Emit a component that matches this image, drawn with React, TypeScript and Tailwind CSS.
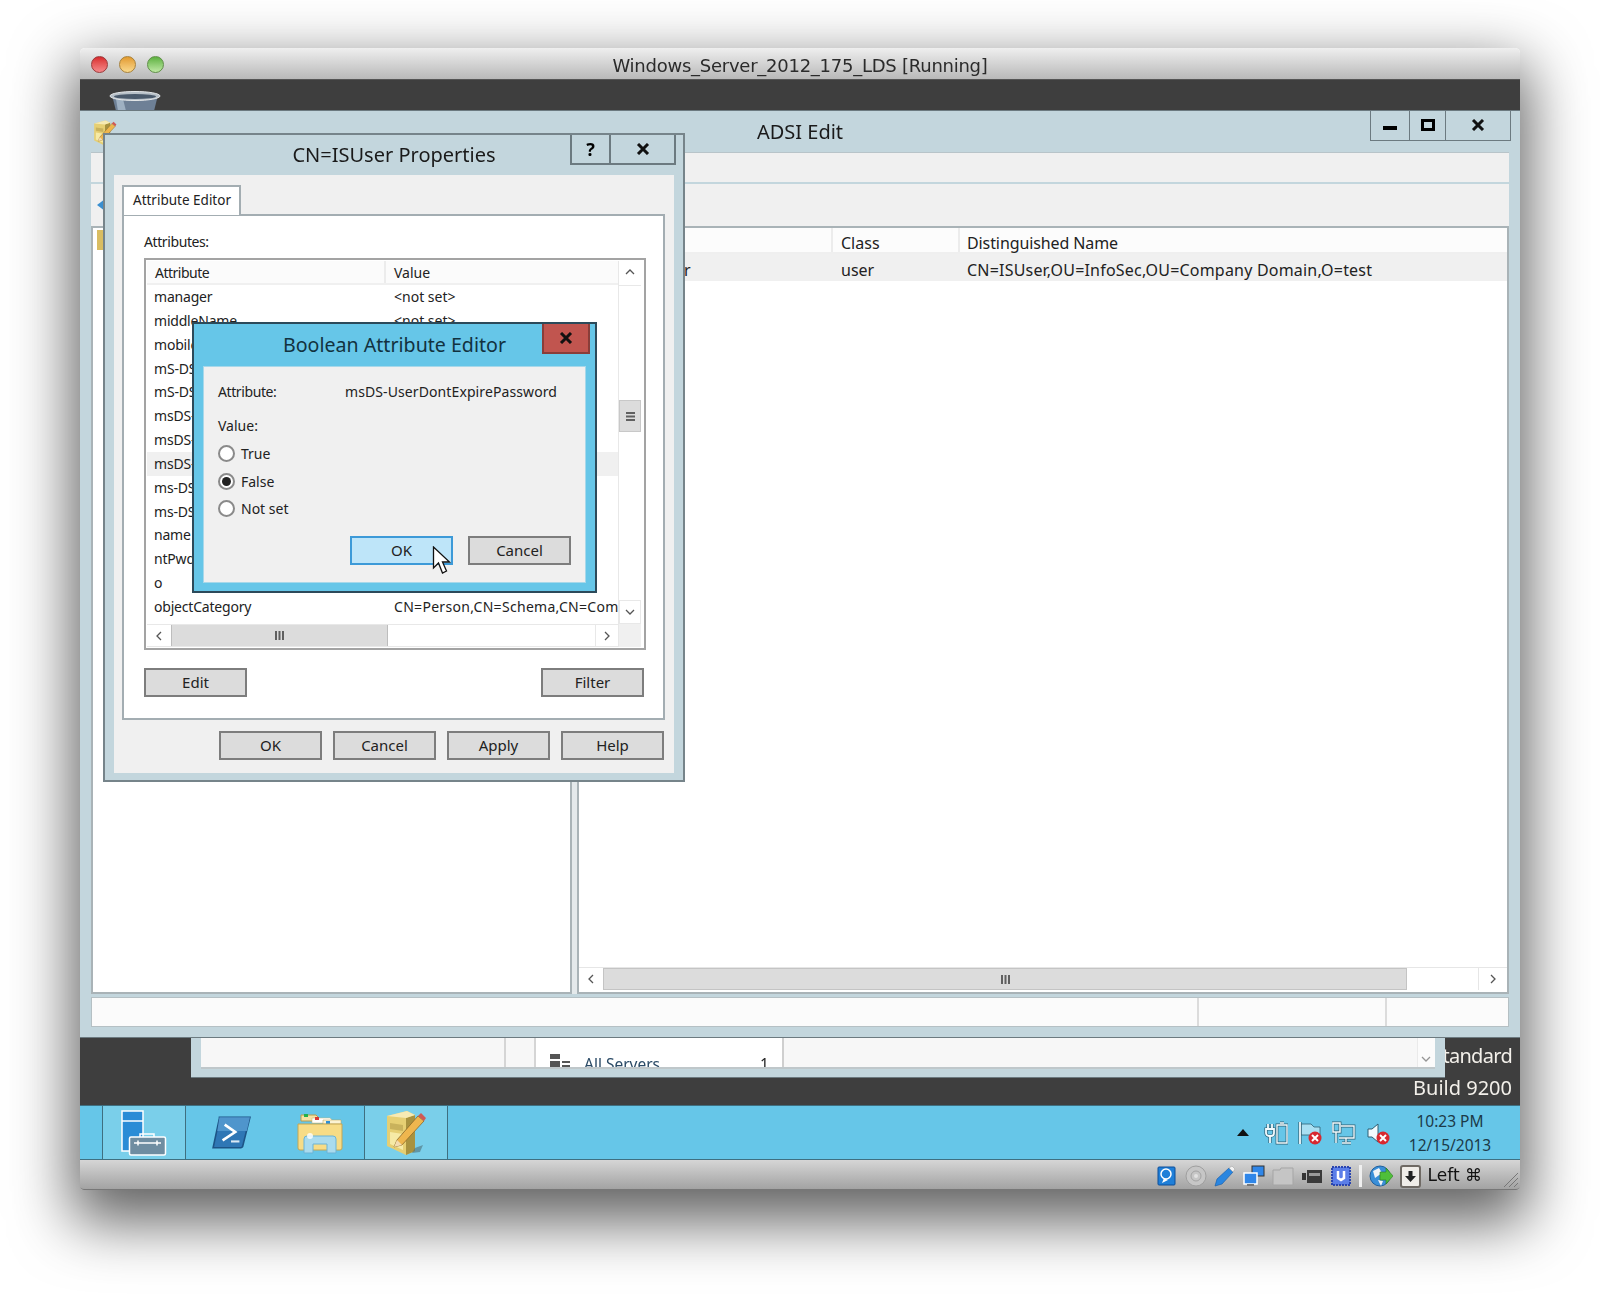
// App.tsx
import React from "react";

const rows = [
  ["manager", "<not set>"],
  ["middleName", "<not set>"],
  ["mobile", "<not set>"],
  ["mS-DS-ConsistencyChildCount", "<not set>"],
  ["mS-DS-ConsistencyGuid", "<not set>"],
  ["msDS-UserAccountDisabled", "<not set>"],
  ["msDS-UserPasswordExpired", "<not set>"],
  ["msDS-UserDontExpirePassword", "FALSE"],
  ["ms-DS-ReplicationNotify", "<not set>"],
  ["ms-DS-Security", "<not set>"],
  ["name", "ISUser"],
  ["ntPwdHistory", "<not set>"],
  ["o", "<not set>"],
  ["objectCategory", "CN=Person,CN=Schema,CN=Company"],
];

const Chevron: React.FC<{ dir: "up" | "down" | "left" | "right" }> = ({ dir }) => {
  const d = {
    up: "M2 7l4-4 4 4",
    down: "M2 4l4 4 4-4",
    left: "M8 2L4 6l4 4",
    right: "M4 2l4 4-4 4",
  }[dir];
  return (
    <svg width="12" height="12" viewBox="0 0 12 12" fill="none" stroke="#555" strokeWidth="1.3">
      <path d={d} />
    </svg>
  );
};

const Grip: React.FC<{ vertical?: boolean }> = ({ vertical }) => (
  <svg width="11" height="11" viewBox="0 0 11 11" fill="#606060">
    {vertical ? (
      <path d="M1 1h2v9H1zM4.500 1h2v9h-2zM8 1h2v9H8z" />
    ) : (
      <path d="M1 1h9v2H1zM1 4.500h9v2H1zM1 8h9v2H1z" />
    )}
  </svg>
);

const Btn: React.FC<{ label: string; active?: boolean }> = ({ label, active }) => (
  <div
    className={
      active
        ? "w-[103px] h-[29px] flex items-center justify-center border-2 border-[#3d9ad8] bg-[#bee5f9] text-[15px] text-[#222]"
        : "w-[103px] h-[29px] flex items-center justify-center border-2 border-[#7d7d7d] bg-[#dcdcdc] text-[15px] text-[#222]"
    }
  >
    {label}
  </div>
);

const Radio: React.FC<{ label: string; checked?: boolean; className?: string }> = ({
  label,
  checked,
  className,
}) => (
  <div className={"flex items-center h-[20px] " + (className || "")}>
    <div className="w-[17px] h-[17px] rounded-full border-2 border-[#8a8a8a] bg-white flex items-center justify-center">
      {checked && <div className="w-[9px] h-[9px] rounded-full bg-[#222]" />}
    </div>
    <span className="ml-[6px] text-[14px] text-[#222]">{label}</span>
  </div>
);

const Cross: React.FC = () => (
  <svg width="14" height="12" viewBox="0 0 14 12" stroke="#111" strokeWidth="3" fill="none">
    <path d="M2 1l10 10M12 1L2 11" />
  </svg>
);

const RedX: React.FC<{ x: number; y: number }> = ({ x, y }) => (
  <g>
    <circle cx={x} cy={y} r="6.500" fill="#d8282f" />
    <path d={`M${x - 3} ${y - 3}l6 6M${x + 3} ${y - 3}l-6 6`} stroke="#fff" strokeWidth="2" />
  </g>
);

const NotepadIcon: React.FC<{ size: number }> = ({ size }) => (
  <svg width={size} height={size * 1.07} viewBox="0 0 42 45">
    <path d="M2 6l20-5 8 4v36l-9 4L2 36z" fill="#e6cf73" />
    <path d="M21 8l9-3v36l-9 4z" fill="#a8923f" />
    <path d="M2 6l20-5 8 4-9 3z" fill="#f6eab4" />
    <path d="M5 13l13 2v6L5 19z" fill="#c9b25c" />
    <path d="M5 22l13 2v16L5 34z" fill="#f6eaa6" />
    <path d="M30 38l8-3-3 7-8 1z" fill="#4f6f78" opacity="0.6" />
    <path d="M9 37l3-7 21-24 6 5-22 24z" fill="#eeb64e" stroke="#8a6a2a" strokeWidth="0.8" />
    <path d="M33 6l3-3 5 5-2 3z" fill="#cf5a55" />
    <path d="M9 37l3-7 5 5z" fill="#f3dcb0" />
  </svg>
);

const ServerManagerIcon: React.FC = () => (
  <svg width="46" height="46" viewBox="0 0 46 46">
    <rect x="1" y="1" width="21" height="40" fill="#2a8cd6" stroke="#fff" strokeWidth="1.5" />
    <path d="M1 11h21" stroke="#fff" strokeWidth="1.500" />
    <path d="M19 27v-3h14v3" fill="none" stroke="#fff" strokeWidth="1.500" />
    <rect x="8.500" y="27" width="36" height="18" rx="1.500" fill="#6f8da1" stroke="#fff" strokeWidth="1.500" />
    <path d="M13 33h27" stroke="#fff" strokeWidth="1.500" />
    <path d="M17 30.500v5M36 30.500v5" stroke="#fff" strokeWidth="1.500" />
  </svg>
);

const PowerShellIcon: React.FC = () => (
  <svg width="40" height="33" viewBox="0 0 38 31">
    <path d="M8 1h29l-7 28a2 2 0 0 1-2 1H2l6-28z" fill="#2f77b5" stroke="#1d5486" strokeWidth="1.500" />
    <path d="M8 1h29l-3 13H6z" fill="#4f95cc" />
    <path d="M13 8l10 7-12 8" fill="none" stroke="#fff" strokeWidth="2.500" />
    <path d="M19 24h8" stroke="#dbe9f4" strokeWidth="2" />
  </svg>
);

const ExplorerIcon: React.FC = () => (
  <svg width="46" height="42" viewBox="0 0 46 42">
    <path d="M4 9V3h15l3 3v3z" fill="#f5e2a2" stroke="#b99c4c" />
    <rect x="7" y="2" width="4" height="3" fill="#22b14c" />
    <path d="M15 11V6h18l2 2v3z" fill="#fff" stroke="#c9b673" strokeWidth="0.500" />
    <rect x="18" y="5" width="4" height="3" fill="#d83a35" />
    <path d="M26 12V8h18v4z" fill="#fbf3d3" stroke="#b99c4c" strokeWidth="0.500" />
    <rect x="29" y="9" width="4" height="3" fill="#2d8fd8" />
    <path d="M1 12h44v24a2 2 0 0 1-2 2H3a2 2 0 0 1-2-2z" fill="#f7dc86" stroke="#c3a655" />
    <path d="M7 41V27a3 3 0 0 1 3-3h26a3 3 0 0 1 3 3v14h-9V32H16v9z" fill="#a9dbee" stroke="#6ab3d6" />
    <circle cx="13" cy="24" r="3" fill="#fff" opacity="0.800" />
  </svg>
);

const Tray: React.FC<{ children: React.ReactNode }> = ({ children }) => (
  <svg width="24" height="24" viewBox="0 0 24 24" fill="none">
    {children}
  </svg>
);

// tray glyphs are white with a dark rim, so each outline is stroked twice
const Rim: React.FC<{ d: string; w?: number }> = ({ d, w = 1.8 }) => (
  <g>
    <path d={d} stroke="#2f5f73" strokeWidth={w + 1.4} />
    <path d={d} stroke="#f2fbfe" strokeWidth={w} />
  </g>
);

const Ic: React.FC<{ w?: number; children: React.ReactNode }> = ({ w = 22, children }) => (
  <svg width={w} height="22" viewBox={`0 0 ${w} 22`}>
    {children}
  </svg>
);

export default function App() {
  return (
    <div className="w-[1600px] h-[1301px] bg-white pl-[80px] pt-[48px] overflow-hidden font-['Noto_Sans',sans-serif]">
      <div className="w-[1440px] h-[1142px] flex flex-col rounded-t-[5px] rounded-b-[4px] blur-[0.35px] shadow-[0_24px_60px_8px_rgba(0,0,0,0.62)]">
        {/* mac title bar */}
        <div className="relative h-[32px] flex items-center justify-center pt-[3px] rounded-t-[5px] bg-gradient-to-b from-[#efefef] to-[#b9b9b9] border-b border-[#555]">
          <div className="absolute left-[11px] top-[8px] flex gap-[11px]">
            <div className="w-[17px] h-[17px] rounded-full border border-[#9a3a3a] bg-gradient-to-b from-[#d8262c] to-[#f5878a]" />
            <div className="w-[17px] h-[17px] rounded-full border border-[#a8813a] bg-gradient-to-b from-[#e29a2b] to-[#f9d98b]" />
            <div className="w-[17px] h-[17px] rounded-full border border-[#5f8f47] bg-gradient-to-b from-[#5cb13e] to-[#bfe9a4]" />
          </div>
          <span className="text-[18px] text-[#2b2b2b] font-['DejaVu_Sans',sans-serif] tracking-[-0.25px]">
            Windows_Server_2012_175_LDS [Running]
          </span>
        </div>

        {/* guest screen */}
        <div className="flex-1 flex flex-col bg-[#3e3e3e]">
          <div className="relative flex-1">
            {/* recycle bin peeking out */}
            <svg className="absolute left-[29px] top-[11px]" width="52" height="20" viewBox="0 0 52 20">
              <path d="M3 4l4 16h38l4-16z" fill="#6e8096" />
              <path d="M7 8l2 12h8L14 8z" fill="#9eb0c2" />
              <ellipse cx="26" cy="5" rx="25" ry="4.500" fill="#b7c0c8" stroke="#e3e6e8" />
              <ellipse cx="26" cy="5.500" rx="21" ry="2.500" fill="#4a5a6c" />
            </svg>

            {/* desktop text */}
            <div className="absolute right-[8px] top-[960px] text-right text-[20px] leading-[32px] text-[#f3f0ea]">
              <div className="tracking-[-0.7px]">Standard</div>
              <div>Build 9200</div>
            </div>

            {/* server manager behind */}
            <div className="absolute left-[111px] top-[948px] w-[1254px] h-[50px] bg-[#c3d6dd] border-b border-[#6c7a80] px-[10px] pb-[8px]">
              <div className="h-full flex bg-[#f7f7f7] border-b-2 border-[#bfc7ca]">
                <div className="w-[305px] border-r-2 border-[#d5d5d5]" />
                <div className="w-[30px] border-r-2 border-[#d5d5d5]" />
                <div className="w-[248px] bg-white border-r-2 border-[#cfcfcf] overflow-hidden relative">
                  <div className="flex items-start pl-[14px] pt-[26px]">
                    <svg width="20" height="14" viewBox="0 0 20 14" fill="#555">
                      <path d="M0 0h10v5H0zM0 7h10v7H0zM12 7h8v2h-8zM12 11h8v2h-8z" />
                    </svg>
                    <span className="ml-[14px] text-[15.500px] text-[#2a4a66] leading-[20px]">All Servers</span>
                    <span className="ml-[100px] text-[15.500px] text-[#222] leading-[20px]">1</span>
                  </div>
                </div>
                <div className="flex-1" />
                <div className="w-[18px] flex flex-col justify-end items-center bg-white border-l border-[#e3e3e3] pb-[2px] pr-[2px] opacity-60">
                  <Chevron dir="down" />
                </div>
              </div>
            </div>

            {/* ADSI Edit */}
            <div className="absolute left-0 top-[30px] w-[1440px] h-[928px] flex flex-col bg-[#c3d6dd] border-y border-[#6c7a80] px-[11px] pb-[10px]">
              <div className="relative h-[41px] shrink-0 flex items-center justify-center pt-[1px]">
                <div className="absolute left-[2px] top-[9px]">
                  <NotepadIcon size={24} />
                </div>
                <span className="text-[20px] text-[#1a1a1a]">ADSI Edit</span>
                <div className="absolute right-[-2px] top-[-1px] h-[31px] flex border border-[#6c7a80] border-t-0">
                  <div className="w-[39px] flex items-center justify-center border-r border-[#6c7a80]">
                    <div className="w-[14px] h-[4px] mt-[6px] bg-black" />
                  </div>
                  <div className="w-[36px] flex items-center justify-center border-r border-[#6c7a80]">
                    <div className="w-[14px] h-[12px] border-[3px] border-black" />
                  </div>
                  <div className="w-[64px] flex items-center justify-center">
                    <Cross />
                  </div>
                </div>
              </div>
              <div className="h-[30px] shrink-0 bg-[#f0f0f0] border-t border-[#b8c4c9]" />
              <div className="h-[42px] shrink-0 mt-[2px] bg-[#f0f0f0] flex items-center pl-[6px]">
                <svg width="8" height="12" viewBox="0 0 8 12" fill="#3a8fd0">
                  <path d="M0 6l8-6v12z" />
                </svg>
              </div>
              <div className="flex-1 min-h-0 flex gap-[5px] bg-[#e4e9eb]">
                <div className="w-[481px] bg-white border-2 border-[#a9b3b7] pl-[4px] pt-[2px]">
                  <div className="w-[8px] h-[20px] bg-[#d9bd62]" />
                </div>
                <div className="flex-1 flex flex-col bg-white border-2 border-[#a9b3b7]">
                  <div className="h-[26px] flex text-[16px] text-[#222] bg-[#fcfcfc] border-b-2 border-[#efefef]">
                    <div className="w-[254px] border-r-2 border-[#ececec]" />
                    <div className="w-[127px] border-r-2 border-[#ececec] pl-[8px] leading-[31px]">Class</div>
                    <div className="flex-1 pl-[7px] leading-[31px] tracking-[-0.1px]">Distinguished Name</div>
                  </div>
                  <div className="h-[27px] flex text-[16px] text-[#222] bg-[#f0f0f0] leading-[32px]">
                    <div className="w-[254px] pl-[31px]">CN=ISUser</div>
                    <div className="w-[127px] pl-[8px]">user</div>
                    <div className="flex-1 pl-[7px] tracking-[0.2px]">CN=ISUser,OU=InfoSec,OU=Company Domain,O=test</div>
                  </div>
                  <div className="flex-1" />
                  <div className="h-[23px] mb-[2px] flex items-stretch border-t border-[#e6e6e6]">
                    <div className="w-[24px] flex items-center justify-center">
                      <Chevron dir="left" />
                    </div>
                    <div className="w-[804px] flex items-center justify-center bg-[#dcdcdc] border border-[#c4c4c4]">
                      <Grip vertical />
                    </div>
                    <div className="flex-1" />
                    <div className="w-[29px] flex items-center justify-center border-l border-[#e6e6e6]">
                      <Chevron dir="right" />
                    </div>
                  </div>
                </div>
              </div>
              <div className="h-[30px] shrink-0 mt-[3px] flex bg-[#fbfbfb] border border-[#b5c0c4]">
                <div className="w-[1107px] border-r-2 border-[#dcdcdc]" />
                <div className="w-[188px] border-r-2 border-[#dcdcdc]" />
              </div>
            </div>

            {/* CN=ISUser Properties */}
            <div className="absolute left-[23px] top-[53px] w-[582px] h-[649px] flex flex-col bg-[#c3d6dd] border-2 border-[#76848a] px-[9px] pb-[7px]">
              <div className="relative h-[40px] shrink-0 flex items-center justify-center">
                <span className="text-[20px] text-[#1a1a1a]">CN=ISUser Properties</span>
                <div className="absolute right-[-2px] top-0 h-[30px] flex border-2 border-t-0 border-[#6c7a80]">
                  <div className="w-[39px] flex items-center justify-center border-r-2 border-[#6c7a80] text-[18px] font-bold text-black">
                    ?
                  </div>
                  <div className="w-[63px] flex items-center justify-center">
                    <Cross />
                  </div>
                </div>
              </div>
              <div className="flex-1 min-h-0 flex flex-col bg-[#f0f0f0] pt-[10px]">
                <div className="relative z-10 ml-[8px] w-[119px] h-[30px] mb-[-1px] bg-white border-2 border-b-0 border-[#a3adb2] text-[13.500px] leading-[27px] pl-[9px] text-[#222] whitespace-nowrap">
                  Attribute Editor
                </div>
                <div className="ml-[8px] w-[543px] h-[506px] bg-white border-2 border-[#a3adb2] pl-[20px] pr-[16px] pt-[16px]">
                  <div className="text-[14px] tracking-[-0.4px] leading-[20px] text-[#222] h-[26px]">Attributes:</div>
                  <div className="w-[502px] h-[392px] flex border-2 border-[#a3a3a3] p-[1px]">
                    <div className="flex-1 min-w-0 flex flex-col">
                      <div className="h-[24px] flex text-[14px] text-[#222] leading-[23px] border-b-2 border-[#f0f0f0] bg-[#fbfbfb]">
                        <div className="w-[239px] pl-[8px] tracking-[-0.5px] border-r-2 border-[#ececec]">Attribute</div>
                        <div className="pl-[8px]">Value</div>
                      </div>
                      <div className="flex-1 overflow-hidden">
                        {rows.map((r, i) => (
                          <div
                            key={r[0]}
                            className={
                              i === 7
                                ? "h-[23.850px] flex text-[14px] text-[#222] leading-[23px] bg-[#f0f0f0]"
                                : "h-[23.850px] flex text-[14px] text-[#222] leading-[23px]"
                            }
                          >
                            <div className="w-[240px] shrink-0 pl-[7px] tracking-[-0.2px] whitespace-nowrap overflow-hidden">
                              {r[0]}
                            </div>
                            <div
                              className={
                                i === 13
                                  ? "pl-[7px] tracking-[0.3px] whitespace-nowrap overflow-hidden"
                                  : "pl-[7px] whitespace-nowrap overflow-hidden"
                              }
                            >
                              {r[1]}
                            </div>
                          </div>
                        ))}
                      </div>
                      <div className="h-[23px] flex border-y border-[#e8e8e8]">
                        <div className="w-[24px] flex items-center justify-center">
                          <Chevron dir="left" />
                        </div>
                        <div className="w-[217px] flex items-center justify-center bg-[#dcdcdc] border-x border-[#bdbdbd]">
                          <Grip vertical />
                        </div>
                        <div className="flex-1" />
                        <div className="w-[23px] flex items-center justify-center border-l border-[#e8e8e8]">
                          <Chevron dir="right" />
                        </div>
                      </div>
                    </div>
                    <div className="w-[25px] shrink-0 flex flex-col pr-[2px] border-l border-[#e8e8e8]">
                      <div className="h-[25px] flex items-center justify-center border-b border-[#e8e8e8]">
                        <Chevron dir="up" />
                      </div>
                      <div className="h-[114px]" />
                      <div className="h-[32px] flex items-center justify-center bg-[#dcdcdc] border border-[#c8c8c8]">
                        <Grip />
                      </div>
                      <div className="flex-1" />
                      <div className="h-[24px] flex items-center justify-center border border-[#e8e8e8]">
                        <Chevron dir="down" />
                      </div>
                      <div className="h-[23px] bg-[#f0f0f0]" />
                    </div>
                  </div>
                  <div className="mt-[18px] flex justify-between pr-[3px]">
                    <Btn label="Edit" />
                    <Btn label="Filter" />
                  </div>
                </div>
                <div className="mt-[11px] flex gap-[11px] pl-[105px]">
                  <Btn label="OK" />
                  <Btn label="Cancel" />
                  <Btn label="Apply" />
                  <Btn label="Help" />
                </div>
              </div>
            </div>

            {/* Boolean Attribute Editor */}
            <div className="absolute left-[112px] top-[242px] w-[405px] h-[271px] flex flex-col bg-[#66c6e8] border-2 border-[#2c4a5a] px-[9px] pb-[8px]">
              <div className="relative h-[42px] shrink-0 flex items-center justify-center">
                <span className="text-[19.600px] text-[#12323f]">Boolean Attribute Editor</span>
                <div className="absolute right-[-4px] top-0 w-[48px] h-[30px] flex items-center justify-center bg-[#c1554f] border-2 border-t-0 border-[#8a3d39]">
                  <Cross />
                </div>
              </div>
              <div className="flex-1 bg-[#f0f0f0] border border-[#a7d8ea] pl-[14px] pt-[14px] text-[14px] text-[#222]">
                <div className="flex h-[20px] items-center">
                  <span className="w-[127px] tracking-[-0.4px]">Attribute:</span>
                  <span className="tracking-[0.1px]">msDS-UserDontExpirePassword</span>
                </div>
                <div className="mt-[15px] h-[20px] leading-[20px]">Value:</div>
                <Radio label="True" className="mt-[7px]" />
                <Radio label="False" checked className="mt-[8px]" />
                <Radio label="Not set" className="mt-[7px]" />
                <div className="mt-[18px] flex gap-[15px] pl-[132px]">
                  <Btn label="OK" active />
                  <Btn label="Cancel" />
                </div>
              </div>
            </div>

            {/* mouse pointer */}
            <svg className="absolute left-[352px] top-[466px]" width="20" height="30" viewBox="0 0 20 30">
              <path d="M1.500 1v21l5-5 4 10 4-2-4-9h7z" fill="#fff" stroke="#111" strokeWidth="1.300" />
            </svg>
          </div>

          {/* taskbar */}
          <div className="h-[55px] shrink-0 flex items-stretch bg-[#66c6e8] border-y border-[#3f6f80]">
            <div className="w-[23px] border-r border-[#3f6f80]" />
            <div className="w-[83px] flex items-center justify-center bg-[#7acfea] border-r border-[#3f6f80]">
              <ServerManagerIcon />
            </div>
            <div className="w-[90px] flex items-center justify-center">
              <PowerShellIcon />
            </div>
            <div className="w-[89px] flex items-center justify-center border-r border-[#3f6f80]">
              <ExplorerIcon />
            </div>
            <div className="w-[83px] flex items-center justify-center bg-[#7acfea] border-r border-[#3f6f80]">
              <NotepadIcon size={42} />
            </div>
            <div className="flex-1 flex items-center justify-end pr-[10px]">
              <svg width="12" height="7" viewBox="0 0 12 7" fill="#111">
                <path d="M6 0l6 7H0z" />
              </svg>
              <div className="ml-[15px] flex gap-[10px] items-center">
                <Tray>
                  <Rim d="M4 3v5M8 3v5M2 8h8v4a3 3 0 0 1-3 3H5a3 3 0 0 1-3-3zM6 15v7" />
                  <Rim d="M13 4h10v18H13zM16 2h4" w={1.4} />
                </Tray>
                <Tray>
                  <path d="M3 3h10l3 3h6v8H3z" fill="#a9dff2" stroke="#2f5f73" strokeWidth="0.800" />
                  <Rim d="M2 1v22" />
                  <RedX x={17} y={17} />
                </Tray>
                <Tray>
                  <Rim d="M1 2h7v9H1zM4 11v11" w={1.5} />
                  <Rim d="M9 5h13v12H7M14 17v4M10 22h9" w={1.4} />
                </Tray>
                <Tray>
                  <path d="M2 8h4l6-5v18l-6-5H2z" fill="#f2fbfe" stroke="#2f5f73" strokeWidth="1" />
                  <RedX x={17} y={17} />
                </Tray>
              </div>
              <div className="w-[120px] text-center text-[15.500px] leading-[24px] text-[#1c3a48]">
                <div>10:23 PM</div>
                <div>12/15/2013</div>
              </div>
            </div>
          </div>
        </div>

        {/* virtualbox status bar */}
        <div className="h-[30px] shrink-0 relative flex items-center justify-end pr-[38px] pt-[3px] gap-[7px] rounded-b-[4px] bg-gradient-to-b from-[#d6d6d6] to-[#a3a3a3] border-b border-[#777]">
          <Ic>
            <rect x="2" y="2" width="17" height="18" rx="1" fill="#1f7fd8" stroke="#0d4f9a" />
            <circle cx="10" cy="9" r="5" fill="none" stroke="#fff" strokeWidth="1.500" />
            <path d="M8 13l-2 5 6-3" fill="#fff" />
          </Ic>
          <Ic>
            <circle cx="11" cy="11" r="10" fill="#c6c6c6" stroke="#9f9f9f" />
            <circle cx="11" cy="11" r="5" fill="none" stroke="#a3a3a3" />
            <circle cx="11" cy="11" r="2" fill="#e2e2e2" />
          </Ic>
          <Ic>
            <path d="M1 21l2-7L15 3l4 4L8 19z" fill="#2a86e0" stroke="#1159a8" strokeWidth="0.600" />
            <path d="M15 3l3-2 3 3-2 3z" fill="#f2f2f2" stroke="#999" strokeWidth="0.500" />
          </Ic>
          <Ic>
            <rect x="9" y="1" width="12" height="10" fill="#2f86e8" stroke="#333" />
            <rect x="1" y="8" width="13" height="11" fill="#2f86e8" stroke="#fff" strokeWidth="1.500" />
            <rect x="4" y="19" width="7" height="2" fill="#777" />
          </Ic>
          <Ic>
            <path d="M1 5h7l1-2h12v17H1z" fill="#c5c5c5" stroke="#a5a5a5" />
          </Ic>
          <Ic>
            <path d="M1 8h4v7H1z" fill="#333" />
            <rect x="6" y="5" width="15" height="13" fill="#3a3a3a" />
            <path d="M8 8h11v3H8z" fill="#9a9a9a" />
          </Ic>
          <Ic>
            <rect x="2" y="2" width="18" height="18" fill="#5b7ee8" stroke="#2b45b0" strokeDasharray="2 1" strokeWidth="2" />
            <path d="M8 6v7l3 2 3-2V6" fill="none" stroke="#fff" strokeWidth="2.500" />
          </Ic>
          <div className="w-[3px] h-[22px] bg-[#f0f0f0]" />
          <Ic w={24}>
            <circle cx="11" cy="11" r="10" fill="#3a8fd8" stroke="#1e5f9e" />
            <path d="M4 6l6-3 3 5-7 5zM9 15l5 1-2 5z" fill="#f1f4f7" />
            <path d="M11 7h6V3l7 8-7 8v-4h-6z" fill="#4fbf3a" stroke="#2a7d1f" strokeWidth="0.600" />
          </Ic>
          <div className="w-[21px] h-[23px] flex items-center justify-center rounded-[3px] bg-[#f0ede8] border-2 border-[#6f6a64]">
            <svg width="11" height="11" viewBox="0 0 11 11" fill="#222">
              <path d="M3.500 0h4v5H11l-5.500 6L0 5h3.500z" />
            </svg>
          </div>
          <span className="text-[17px] text-[#111] font-['DejaVu_Sans',sans-serif] whitespace-nowrap">Left ⌘</span>
          <svg className="absolute right-[1px] bottom-[1px]" width="16" height="16" viewBox="0 0 16 16" stroke="#777" strokeWidth="1">
            <path d="M1 15L15 1M6 15l9-9M11 15l4-4" />
          </svg>
        </div>
      </div>
    </div>
  );
}
